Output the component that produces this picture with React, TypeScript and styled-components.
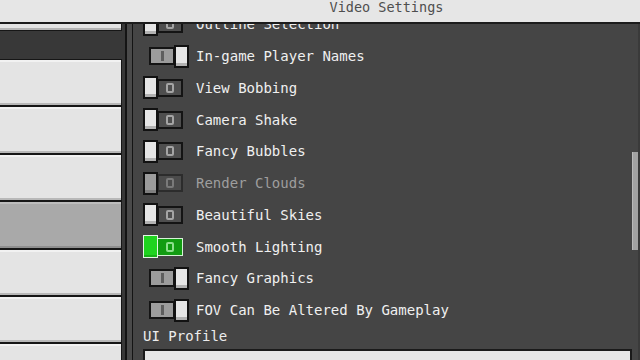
import React from 'react';
import styled, { createGlobalStyle, css } from 'styled-components';

const Global = createGlobalStyle`
  html, body { margin: 0; padding: 0; width: 640px; height: 360px; overflow: hidden; background: #333333; }
  body { font-family: "DejaVu Sans Mono", "Liberation Mono", monospace; }
  * { box-sizing: border-box; }
`;

const Screen = styled.div`
  width: 640px;
  height: 360px;
  display: flex;
  flex-direction: column;
  overflow: hidden;
`;

const Header = styled.header`
  height: 24px;
  flex: none;
  display: flex;
  background: #e6e6e6;
  border-bottom: 2px solid #1c1c1c;
`;

const HeaderSpacer = styled.div`
  width: 133px;
  flex: none;
`;

const Title = styled.h1`
  flex: 1;
  margin: 0;
  text-align: center;
  font-size: 13.5px;
  line-height: 14px;
  font-weight: normal;
  color: #4e4e4e;
`;

const Body = styled.div`
  flex: 1;
  min-height: 0;
  display: flex;
`;

const Sidebar = styled.nav`
  width: 125px;
  flex: none;
  display: flex;
  flex-direction: column;
  overflow: hidden;
  background: #383838;
`;

const PartialButton = styled.div`
  width: 122px;
  height: 7px;
  flex: none;
  background: #e4e4e4;
  border-bottom: 1px solid #161616;
  border-right: 1px solid #161616;
  box-shadow: inset 0 -2px #b4b4b4;
`;

const SectionGap = styled.div`
  height: 28px;
  flex: none;
`;

const NavButton = styled.div<{ $selected?: boolean }>`
  width: 122px;
  height: 47.4px;
  flex: none;
  background: ${(p) => (p.$selected ? '#a9a9a9' : '#e4e4e4')};
  border-top: 1px solid #161616;
  border-bottom: 1px solid #161616;
  border-right: 1px solid #161616;
  box-shadow: inset 0 -2px ${(p) => (p.$selected ? '#8e8e8e' : '#b8b8b8')},
    inset 0 2px ${(p) => (p.$selected ? '#bcbcbc' : '#f2f2f2')};
`;

const Divider = styled.div`
  width: 8px;
  flex: none;
  background: #4a4a4a;
  border-left: 2px solid #141414;
  border-right: 1px solid #141414;
`;

const Panel = styled.main`
  flex: 1;
  min-width: 0;
  display: flex;
  background: #454545;
  overflow: hidden;
`;

const Content = styled.div`
  flex: 1;
  min-width: 0;
  padding-left: 10px;
  display: flex;
  flex-direction: column;
`;

const List = styled.div`
  margin-top: -15.6px;
  display: flex;
  flex-direction: column;
`;

const Row = styled.div`
  height: 31.75px;
  flex: none;
  display: flex;
  align-items: center;
`;

const ToggleSlot = styled.div<{ $on: boolean }>`
  width: 53px;
  flex: none;
  display: flex;
  align-items: center;
  padding-left: ${(p) => (p.$on ? '6px' : '0')};
`;

type Variant = 'off' | 'on' | 'disabled' | 'green';

const knobColors: Record<Variant, string> = {
  off: '#e6e6e6',
  on: '#e6e6e6',
  disabled: '#9c9c9c',
  green: '#1fd41f',
};

const trackColors: Record<Variant, string> = {
  off: '#4e4e4e',
  on: '#9c9c9c',
  disabled: '#4b4b4b',
  green: '#129c12',
};

const Knob = styled.span<{ $v: Variant }>`
  position: relative;
  z-index: 1;
  width: 15px;
  height: 23px;
  flex: none;
  background: ${(p) => knobColors[p.$v]};
  ${(p) =>
    p.$v === 'green'
      ? css`
          border: 1px solid #e4f7e4;
          box-shadow: inset 0 -2px #17b017;
        `
      : css`
          border: 2px solid #121212;
          box-shadow: inset 0 -3px ${p.$v === 'disabled' ? '#808080' : '#b2b2b2'};
        `}
`;

const Track = styled.span<{ $v: Variant; $on: boolean }>`
  width: 26px;
  height: 18px;
  flex: none;
  display: flex;
  align-items: center;
  justify-content: center;
  background: ${(p) => trackColors[p.$v]};
  margin: ${(p) => (p.$on ? '0 -1px 0 0' : '0 0 0 -1px')};
  ${(p) =>
    p.$v === 'green'
      ? css`
          border: 1px solid #d6f2d6;
        `
      : css`
          border: 2px solid ${p.$v === 'disabled' ? '#2c2c2c' : '#141414'};
        `}
`;

const RingMark = styled.span<{ $v: Variant }>`
  width: 8px;
  height: 10px;
  border-radius: 2px;
  border: 2px solid
    ${(p) => (p.$v === 'green' ? '#8ee08e' : p.$v === 'disabled' ? '#7a7a7a' : '#a4a4a4')};
`;

const BarMark = styled.span`
  width: 3px;
  height: 10px;
  background: #5e5e5e;
`;

const Label = styled.span<{ $dim?: boolean }>`
  font-size: 14px;
  line-height: 14px;
  white-space: nowrap;
  color: ${(p) => (p.$dim ? '#9e9e9e' : '#f0f0f0')};
`;

const SectionLabel = styled.div`
  height: 20px;
  flex: none;
  display: flex;
  align-items: center;
  font-size: 14px;
  line-height: 14px;
  color: #ececec;
`;

const Dropdown = styled.div`
  margin-top: 3px;
  height: 32px;
  flex: none;
  background: #e6e6e6;
  border: 2px solid #1a1a1a;
`;

const Gutter = styled.div`
  width: 8px;
  flex: none;
  padding-top: 128px;
  border-right: 2px solid #3a3a3a;
`;

const Thumb = styled.div`
  width: 6px;
  height: 98px;
  background: #a2a2a2;
  border-left: 1px solid #bababa;
`;

function Toggle({ v }: { v: Variant }) {
  const on = v === 'on';
  return (
    <ToggleSlot $on={on}>
      {on ? (
        <>
          <Track $v={v} $on>
            <BarMark />
          </Track>
          <Knob $v={v} />
        </>
      ) : (
        <>
          <Knob $v={v} />
          <Track $v={v} $on={false}>
            <RingMark $v={v} />
          </Track>
        </>
      )}
    </ToggleSlot>
  );
}

const rows: { label: string; v: Variant }[] = [
  { label: 'Outline Selection', v: 'off' },
  { label: 'In-game Player Names', v: 'on' },
  { label: 'View Bobbing', v: 'off' },
  { label: 'Camera Shake', v: 'off' },
  { label: 'Fancy Bubbles', v: 'off' },
  { label: 'Render Clouds', v: 'disabled' },
  { label: 'Beautiful Skies', v: 'off' },
  { label: 'Smooth Lighting', v: 'green' },
  { label: 'Fancy Graphics', v: 'on' },
  { label: 'FOV Can Be Altered By Gameplay', v: 'on' },
];

export default function App() {
  return (
    <Screen>
      <Global />
      <Header>
        <HeaderSpacer />
        <Title>Video Settings</Title>
      </Header>
      <Body>
        <Sidebar>
          <PartialButton />
          <SectionGap />
          <NavButton />
          <NavButton />
          <NavButton />
          <NavButton $selected />
          <NavButton />
          <NavButton />
          <NavButton />
        </Sidebar>
        <Divider />
        <Panel>
          <Content>
            <List>
              {rows.map((r) => (
                <Row key={r.label}>
                  <Toggle v={r.v} />
                  <Label $dim={r.v === 'disabled'}>{r.label}</Label>
                </Row>
              ))}
            </List>
            <SectionLabel>UI Profile</SectionLabel>
            <Dropdown />
          </Content>
          <Gutter>
            <Thumb />
          </Gutter>
        </Panel>
      </Body>
    </Screen>
  );
}
